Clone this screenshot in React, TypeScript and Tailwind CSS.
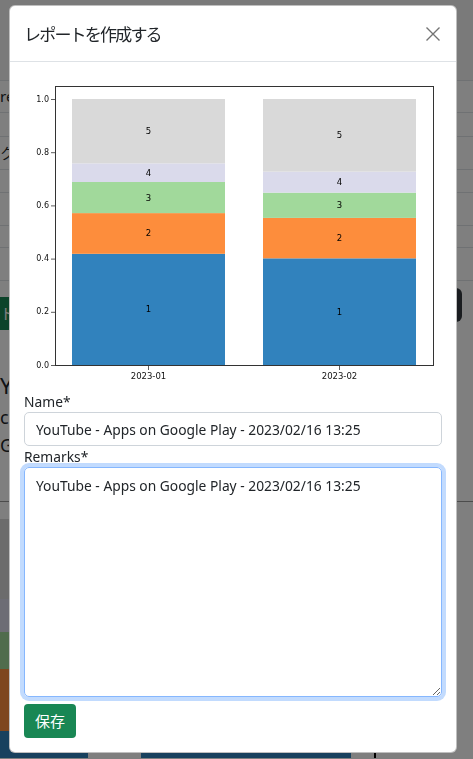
import React from "react";

const SEGMENT_COLORS = ["#3182bd", "#fd8d3c", "#a1d99b", "#dadaeb", "#d9d9d9"];

const BARS = [
  { label: "2023-01", x: 48, cum: [0, 0.418, 0.571, 0.688, 0.758, 1] },
  { label: "2023-02", x: 239, cum: [0, 0.401, 0.553, 0.648, 0.727, 1] },
];

const BAR_WIDTH = 153;
const yOf = (v: number) => 303 - 266 * v;

function ReportChart() {
  return (
    <svg width={419} height={330} viewBox="0 0 419 330" className="block">
      {BARS.map((bar) =>
        SEGMENT_COLORS.map((color, i) => {
          const top = yOf(bar.cum[i + 1]);
          const bottom = yOf(bar.cum[i]);
          return (
            <g key={bar.label + i}>
              <rect x={bar.x} y={top} width={BAR_WIDTH} height={bottom - top} fill={color} />
              <text
                x={bar.x + BAR_WIDTH / 2}
                y={(top + bottom) / 2}
                fontSize={8.5}
                fontFamily="DejaVu Sans, sans-serif"
                textAnchor="middle"
                dominantBaseline="central"
                fill="#000"
              >
                {i + 1}
              </text>
            </g>
          );
        })
      )}
      <rect x={31.5} y={24.5} width={378} height={279} fill="none" stroke="#333" strokeWidth={1} />
      {[0, 0.2, 0.4, 0.6, 0.8, 1].map((v) => (
        <g key={v}>
          <line x1={27} x2={31} y1={yOf(v) + 0.5} y2={yOf(v) + 0.5} stroke="#333" strokeWidth={0.8} />
          <text
            x={25}
            y={yOf(v)}
            fontSize={8}
            fontFamily="DejaVu Sans, sans-serif"
            textAnchor="end"
            dominantBaseline="central"
            fill="#111"
          >
            {v.toFixed(1)}
          </text>
        </g>
      ))}
      {BARS.map((bar) => (
        <g key={bar.label}>
          <line
            x1={bar.x + BAR_WIDTH / 2}
            x2={bar.x + BAR_WIDTH / 2}
            y1={304}
            y2={308}
            stroke="#333"
            strokeWidth={0.8}
          />
          <text
            x={bar.x + BAR_WIDTH / 2}
            y={314}
            fontSize={8.5}
            fontFamily="DejaVu Sans, sans-serif"
            textAnchor="middle"
            dominantBaseline="central"
            fill="#111"
          >
            {bar.label}
          </text>
        </g>
      ))}
    </svg>
  );
}

function BackgroundChart() {
  // only its edges peek out from behind the modal
  const bars = [
    { x: -70, w: 158 },
    { x: 141, w: 210 },
  ];
  const stops = [
    { y: 17, h: 80, c: "#d9d9d9" },
    { y: 97, h: 33, c: "#dadaeb" },
    { y: 130, h: 37, c: "#a1d99b" },
    { y: 167, h: 62, c: "#fd8d3c" },
    { y: 229, h: 40, c: "#3182bd" },
  ];
  return (
    <svg width={473} height={256} className="block">
      {bars.map((b) =>
        stops.map((s) => <rect key={b.x + "-" + s.y} x={b.x} y={s.y} width={b.w} height={s.h} fill={s.c} />)
      )}
      <line x1={375} x2={375} y1={0} y2={256} stroke="#000" strokeWidth={2} />
    </svg>
  );
}

const TABLE_ROWS: { h: string; text: string }[] = [
  { h: "h-[32px]", text: "re" },
  { h: "h-[24px]", text: "" },
  { h: "h-[33px]", text: "ク" },
  { h: "h-[23px]", text: "" },
  { h: "h-[33px]", text: "" },
  { h: "h-[22px]", text: "" },
  { h: "h-[33px]", text: "" },
];

function BackgroundPage() {
  return (
    <div className="h-[759px] w-[473px] overflow-hidden bg-white font-['Noto_Sans','Noto_Sans_CJK_JP',sans-serif] text-[#212529]">
      <div className="h-[81px] border-b border-[#dee2e6] bg-[#f4f4f4]" />
      {TABLE_ROWS.map((row, i) => (
        <div key={i} className={`${row.h} flex items-center border-b border-[#dee2e6] text-[15px]`}>
          {row.text}
        </div>
      ))}
      <div className="flex items-start">
        <div className="mt-[16px] flex h-[33px] w-[20px] items-center bg-[#198754] text-[15px] text-white">ト</div>
        <div className="ml-auto mr-[11px] mt-[7px] h-[34px] w-[60px] rounded-[6px] bg-[#343a40]" />
      </div>
      <div className="mt-[38px] h-[34px] text-[22px] leading-[34px]">Y</div>
      <div className="h-[30px] text-[18px] leading-[30px]">co</div>
      <div className="h-[26px] text-[18px] leading-[26px]">G</div>
      <div className="h-[44px] border-b border-[#999]" />
      <BackgroundChart />
    </div>
  );
}

function CloseIcon() {
  return (
    <svg width={14} height={14} viewBox="0 0 14 14">
      <path d="M0.5 0.5 L13.5 13.5 M13.5 0.5 L0.5 13.5" stroke="#000" strokeOpacity={0.55} strokeWidth={1.4} />
    </svg>
  );
}

const INITIAL_NAME = "YouTube - Apps on Google Play - 2023/02/16 13:25";

export default function App() {
  return (
    <div className="relative h-[759px] w-[473px] overflow-hidden">
      <BackgroundPage />
      <div className="fixed inset-0 bg-black/50" />
      <div className="fixed left-[9px] top-[5px] w-[448px] rounded-[6px] border border-black/25 bg-white font-['Noto_Sans','Noto_Sans_CJK_JP',sans-serif] text-[#212529]">
        <div className="flex h-[56px] items-center justify-between border-b border-[#dee2e6] pl-[14px] pr-[13px]">
          <h5 className="font-['Noto_Sans_CJK_JP',sans-serif] text-[17px] tracking-[-1.8px] text-[#212529]">
            レポートを作成する
          </h5>
          <button type="button" className="flex h-[20px] w-[20px] items-center justify-center">
            <CloseIcon />
          </button>
        </div>
        <div className="flex flex-col px-[14px] pb-[14px]">
          <ReportChart />
          <label className="h-[20px] text-[13.8px] leading-[20px]">Name*</label>
          <input
            className="h-[34px] rounded-[5px] border border-[#ced4da] px-[11px] text-[13.8px] text-[#212529] outline-none"
            defaultValue={INITIAL_NAME}
          />
          <label className="h-[21px] pt-[1px] text-[13.8px] leading-[20px]">Remarks*</label>
          <textarea
            className="h-[230px] rounded-[5px] border border-[#86b7fe] px-[11px] py-[6px] text-[13.8px] leading-[24px] text-[#212529] shadow-[0_0_0_4px_rgba(13,110,253,0.25)] outline-none"
            defaultValue={INITIAL_NAME}
          />
          <div className="mt-[7px]">
            <button
              type="button"
              className="h-[34px] rounded-[4px] bg-[#198754] px-[11px] font-['Noto_Sans_CJK_JP',sans-serif] text-[15px] text-white"
            >
              保存
            </button>
          </div>
        </div>
      </div>
    </div>
  );
}
